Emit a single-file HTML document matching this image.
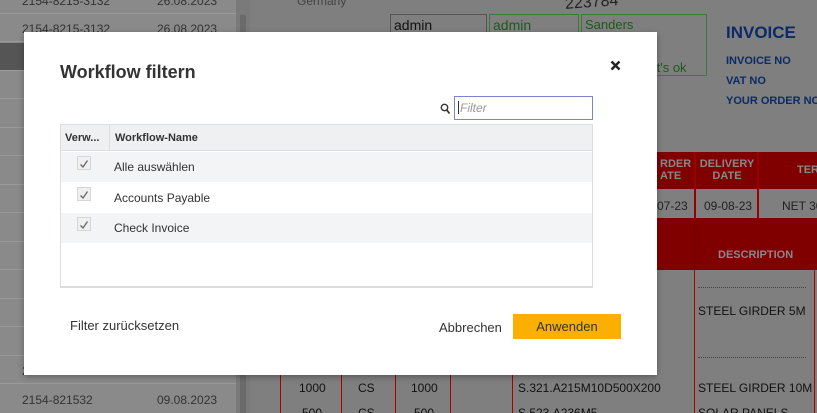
<!DOCTYPE html>
<html><head><style>
*{margin:0;padding:0;box-sizing:border-box;white-space:nowrap}
html,body{width:817px;height:413px;overflow:hidden}
body{position:relative;background:#7f7f7f;font-family:"Liberation Sans",sans-serif}
.a{position:absolute}
.row{position:absolute;left:0;width:236px;height:28px;border-bottom:1px solid #9a9a9a;background:#8a8a8a;font-size:12px;color:#333}
.row span{position:absolute;top:8px}
.t{position:absolute;font-size:12px}
.cb{position:absolute;left:16px;width:14px;height:14px;border:1px solid #d6d6d6;background:#f0f0f0}
</style></head><body>
<div class="a" style="left:0;top:0;width:236px;height:413px;background:#8a8a8a"></div>
<div class="row" style="top:-14px"><span style="left:22px">2154-8215-3132</span><span style="left:157px">26.08.2023</span></div>
<div class="row" style="top:14px"><span style="left:22px">2154-8215-3132</span><span style="left:157px">26.08.2023</span></div>
<div class="row" style="top:43px;background:#555"></div>
<div class="row" style="top:71px"></div><div class="row" style="top:100px"></div><div class="row" style="top:128px"></div>
<div class="row" style="top:157px"></div><div class="row" style="top:185px"></div><div class="row" style="top:214px"></div>
<div class="row" style="top:242px"></div><div class="row" style="top:271px"></div><div class="row" style="top:299px"></div>
<div class="row" style="top:328px"></div>
<div class="row" style="top:356px"><span style="left:22px">2154-821532</span><span style="left:157px">26.08.2023</span></div>
<div class="row" style="top:385px;border:none"><span style="left:22px">2154-821532</span><span style="left:157px">09.08.2023</span></div>
<div class="a" style="left:236px;top:0;width:14px;height:413px;background:#7a7a7a"></div>
<div class="a" style="left:240px;top:15px;width:6px;height:398px;background:#6b6b6b"></div>
<div class="t" style="left:297px;top:-6px;color:#444">Germany</div>
<div class="t" style="left:565px;top:-6px;font-size:16px;color:#222;transform:rotate(-4deg)">223784</div>
<div class="a" style="left:390px;top:14px;width:97px;height:20px;border:1px solid #555"></div>
<div class="t" style="left:394px;top:17px;font-size:14px;color:#111">admin</div>
<div class="a" style="left:489px;top:14px;width:90px;height:60px;border:1px solid #3a7a3a"></div>
<div class="t" style="left:493px;top:17px;font-size:14px;color:#1d5a1d">admin</div>
<div class="a" style="left:581px;top:14px;width:126px;height:62px;border:1px solid #3a7a3a"></div>
<div class="t" style="left:585px;top:17px;font-size:13px;color:#1d5a1d">Sanders</div>
<div class="t" style="left:640px;top:60px;font-size:13px;color:#1d5a1d">s, it's ok</div>
<div class="t" style="left:726px;top:23px;font-size:17px;font-weight:bold;color:#0b2a66">INVOICE</div>
<div class="t" style="left:726px;top:55px;font-size:11px;font-weight:bold;color:#0b2a66">INVOICE NO</div>
<div class="t" style="left:726px;top:75px;font-size:11px;font-weight:bold;color:#0b2a66">VAT NO</div>
<div class="t" style="left:726px;top:95px;font-size:11px;font-weight:bold;color:#0b2a66">YOUR ORDER NO</div>
<div class="a" style="left:640px;top:152px;width:177px;height:37px;background:#800000"></div>
<div class="a" style="left:694px;top:152px;width:2px;height:66px;background:#900"></div>
<div class="a" style="left:757px;top:152px;width:2px;height:66px;background:#900"></div>
<div class="t" style="left:660px;top:158px;font-size:11px;font-weight:bold;color:#888;line-height:12px">RDER<br>ATE</div>
<div class="t" style="left:698px;top:158px;font-size:11px;font-weight:bold;color:#888;line-height:12px;text-align:center;width:58px">DELIVERY<br>DATE</div>
<div class="t" style="left:797px;top:164px;font-size:11px;font-weight:bold;color:#888">TER</div>
<div class="t" style="left:657px;top:199px;font-size:12px;color:#222">07-23</div>
<div class="t" style="left:704px;top:199px;font-size:12px;color:#222">09-08-23</div>
<div class="t" style="left:782px;top:199px;font-size:12px;color:#222">NET 30</div>
<div class="a" style="left:640px;top:218px;width:177px;height:52px;background:#800000"></div>
<div class="a" style="left:694px;top:225px;width:1px;height:45px;background:#6a0000"></div>
<div class="t" style="left:718px;top:249px;font-size:11px;font-weight:bold;color:#888">DESCRIPTION</div>
<div class="a" style="left:694px;top:270px;width:1px;height:143px;background:#a00"></div>
<div class="a" style="left:814px;top:270px;width:1px;height:143px;background:#a00"></div>
<div class="t" style="left:698px;top:304px;font-size:12px;color:#111">STEEL GIRDER 5M</div>
<div class="a" style="left:698px;top:357px;width:108px;border-top:1px dotted #444"></div>
<div class="a" style="left:698px;top:287px;width:108px;border-top:1px dotted #444"></div>
<div class="a" style="left:280px;top:375px;width:1px;height:38px;background:#a00"></div>
<div class="a" style="left:341px;top:375px;width:1px;height:38px;background:#a00"></div>
<div class="a" style="left:395px;top:375px;width:1px;height:38px;background:#a00"></div>
<div class="a" style="left:450px;top:375px;width:1px;height:38px;background:#a00"></div>
<div class="a" style="left:512px;top:375px;width:1px;height:38px;background:#a00"></div>
<div class="t" style="left:299px;top:381px;color:#111">1000</div>
<div class="t" style="left:358px;top:381px;color:#111">CS</div>
<div class="t" style="left:411px;top:381px;color:#111">1000</div>
<div class="t" style="left:518px;top:381px;color:#111">S.321.A215M10D500X200</div>
<div class="t" style="left:698px;top:381px;color:#111">STEEL GIRDER 10M</div>
<div class="t" style="left:302px;top:406px;color:#111">500</div>
<div class="t" style="left:358px;top:406px;color:#111">CS</div>
<div class="t" style="left:414px;top:406px;color:#111">500</div>
<div class="t" style="left:518px;top:406px;color:#111">S.523.A236M5</div>
<div class="t" style="left:698px;top:406px;color:#111">SOLAR PANELS</div>
<div class="a" style="left:24px;top:32px;width:633px;height:343px;background:#fff;box-shadow:0 2px 6px rgba(0,0,0,.3)">
  <div class="a" style="left:36px;top:30px;font-size:18px;font-weight:bold;color:#333">Workflow filtern</div>
  <svg class="a" style="left:586px;top:28px" width="11" height="11" viewBox="0 0 11 11"><path d="M1.5 1.5L9.5 9.5M9.5 1.5L1.5 9.5" stroke="#222" stroke-width="2.4"/></svg>
  <svg class="a" style="left:416px;top:71px" width="11" height="12" viewBox="0 0 11 12"><circle cx="4.5" cy="4.5" r="3.2" fill="none" stroke="#333" stroke-width="1.4"/><path d="M6.8 7L9.5 10.5" stroke="#333" stroke-width="1.8"/></svg>
  <div class="a" style="left:430px;top:64px;width:139px;height:24px;border:1px solid #7b86c9"></div>
  <div class="a" style="left:434px;top:69px;width:1px;height:13px;background:#333"></div>
  <div class="a" style="left:436px;top:69px;font-size:12px;font-style:italic;color:#999">Filter</div>
  <div class="a" style="left:36px;top:92px;width:533px;height:164px;border:1px solid #ddd;border-bottom:2px solid #ddd">
    <div class="a" style="left:0;top:0;width:531px;height:26px;background:#eef0f2;border-bottom:1px solid #ddd"></div>
    <div class="a" style="left:48px;top:0;width:1px;height:26px;background:#ddd"></div>
    <div class="a" style="left:4px;top:7px;font-size:11px;font-weight:bold;color:#333">Verw...</div>
    <div class="a" style="left:54px;top:7px;font-size:11px;font-weight:bold;color:#333">Workflow-Name</div>
    <div class="a" style="left:0;top:27px;width:531px;height:30px;background:#f3f4f5"></div>
    <div class="a" style="left:0;top:88px;width:531px;height:30px;background:#f3f4f5"></div>
    <div class="cb" style="top:31px"><svg width="12" height="12" viewBox="0 0 12 12"><path d="M2.5 6.5L5 9L9.5 2.5" fill="none" stroke="#666" stroke-width="1.3"/></svg></div>
    <div class="cb" style="top:62px"><svg width="12" height="12" viewBox="0 0 12 12"><path d="M2.5 6.5L5 9L9.5 2.5" fill="none" stroke="#666" stroke-width="1.3"/></svg></div>
    <div class="cb" style="top:92px"><svg width="12" height="12" viewBox="0 0 12 12"><path d="M2.5 6.5L5 9L9.5 2.5" fill="none" stroke="#666" stroke-width="1.3"/></svg></div>
    <div class="a" style="left:53px;top:35px;font-size:12px;color:#333">Alle auswählen</div>
    <div class="a" style="left:53px;top:66px;font-size:12px;color:#333">Accounts Payable</div>
    <div class="a" style="left:53px;top:96px;font-size:12px;color:#333">Check Invoice</div>
  </div>
  <div class="a" style="left:46px;top:286px;font-size:13px;color:#333">Filter zurücksetzen</div>
  <div class="a" style="left:415px;top:288px;font-size:13px;color:#333">Abbrechen</div>
  <div class="a" style="left:489px;top:282px;width:108px;height:25px;background:#fbb000;font-size:13px;color:#333;text-align:center;line-height:25px">Anwenden</div>
</div>
</body></html>
